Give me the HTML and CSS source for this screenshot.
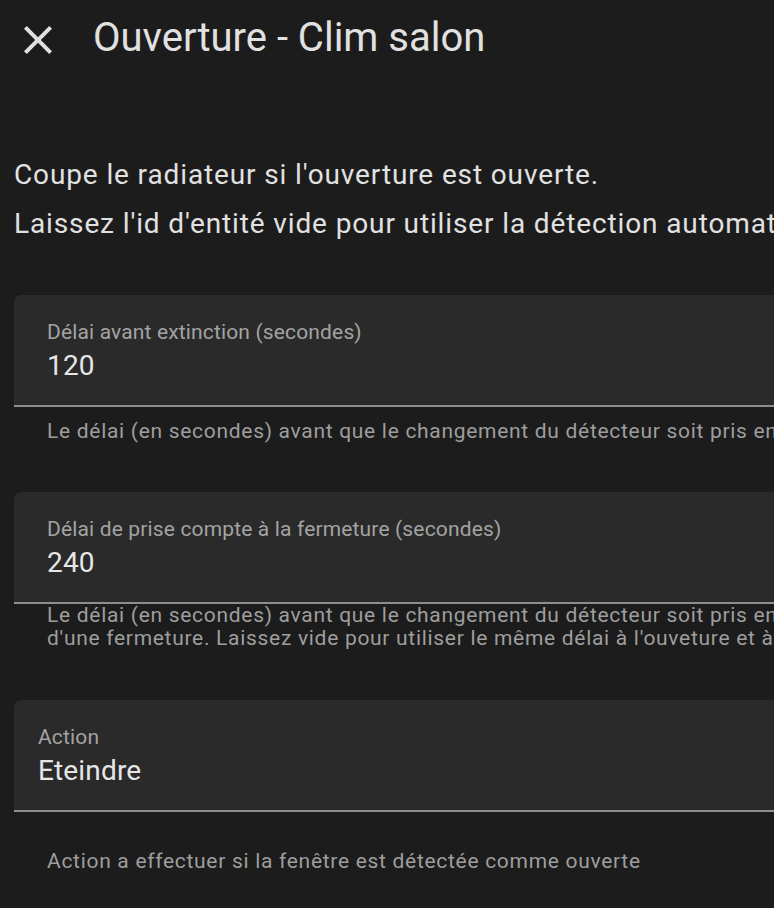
FILE: index.html
```html
<!DOCTYPE html>
<html lang="fr">
<head>
<meta charset="utf-8">
<title>Ouverture - Clim salon</title>
<link rel="stylesheet" href="styles.css">
</head>
<body>
<div class="dialog">
  <header class="dialog-header">
    <button class="close-btn" aria-label="Fermer">
      <svg viewBox="0 0 24 24" width="48" height="48"><path fill="currentColor" d="M19,6.41L17.59,5L12,10.59L6.41,5L5,6.41L10.59,12L5,17.59L6.41,19L12,13.41L17.59,19L19,17.59L13.41,12L19,6.41Z"/></svg>
    </button>
    <h1 class="dialog-title">Ouverture - Clim salon</h1>
  </header>

  <div class="intro">
    <p>Coupe le radiateur si l'ouverture est ouverte.</p>
    <p>Laissez l'id d'entité vide pour utiliser la détection automatique.</p>
  </div>

  <div class="field field-first">
    <div class="field-box">
      <div class="field-label">Délai avant extinction (secondes)</div>
      <div class="field-value">120</div>
    </div>
    <div class="helper helper-spaced">Le délai (en secondes) avant que le changement du détecteur soit pris en compte</div>
  </div>

  <div class="field field-wide">
    <div class="field-box">
      <div class="field-label">Délai de prise compte à la fermeture (secondes)</div>
      <div class="field-value">240</div>
    </div>
    <div class="helper">Le délai (en secondes) avant que le changement du détecteur soit pris en compte lors d'une fermeture. Laissez vide pour utiliser le même délai à l'ouveture et à la fermeture.</div>
  </div>

  <div class="field">
    <div class="field-box field-select">
      <div class="field-label">Action</div>
      <div class="field-value">Eteindre</div>
    </div>
    <div class="helper helper-far">Action a effectuer si la fenêtre est détectée comme ouverte</div>
  </div>
</div>
</body>
</html>
```
FILE: styles.css
```css
html, body {
  margin: 0;
  padding: 0;
  background: #1c1c1c;
  overflow: hidden;
}

body {
  font-family: Roboto, "Noto Sans", sans-serif;
  color: #e1e1e1;
}

.dialog {
  width: 1100px;
  padding: 10px 0 0 14px;
  box-sizing: border-box;
}

.dialog-header {
  display: flex;
  align-items: flex-start;
  height: 56px;
}

.close-btn {
  margin: 6px 0 0 0;
  padding: 0;
  border: 0;
  background: none;
  color: #e1e1e1;
  width: 48px;
  height: 48px;
  display: block;
}

.close-btn svg {
  display: block;
}

.dialog-title {
  margin: 0 0 0 31px;
  font-size: 40px;
  font-weight: 400;
  line-height: 56px;
  color: #e1e1e1;
  white-space: nowrap;
}

.intro {
  margin-top: 84px;
}

.intro p {
  margin: 0;
  font-size: 28px;
  line-height: 49px;
  white-space: nowrap;
  letter-spacing: 0.875px;
}

.field-first {
  margin-top: 47px;
}

.field {
  margin-bottom: 49px;
}

.field-wide {
  margin-bottom: 50px;
}

.field-box {
  background: #2a2a2a;
  border-top-left-radius: 7px;
  border-bottom: 2px solid #8e8e8e;
  height: 112px;
  padding: 25px 0 0 33px;
  box-sizing: border-box;
}

.field-select {
  padding-left: 24px;
}

.field-label {
  font-size: 21px;
  line-height: 24px;
  color: #a3a3a3;
  letter-spacing: 0.15px;
}

.field-value {
  margin-top: 6px;
  font-size: 28px;
  line-height: 32px;
  color: #e6e6e6;
  letter-spacing: 0.15px;
}

.helper {
  width: 905px;
  padding-left: 33px;
  font-size: 21px;
  line-height: 23px;
  color: #9e9e9e;
  letter-spacing: 0.7px;
}

.helper-spaced {
  margin-top: 13px;
}

.helper-far {
  margin-top: 38px;
}
```
